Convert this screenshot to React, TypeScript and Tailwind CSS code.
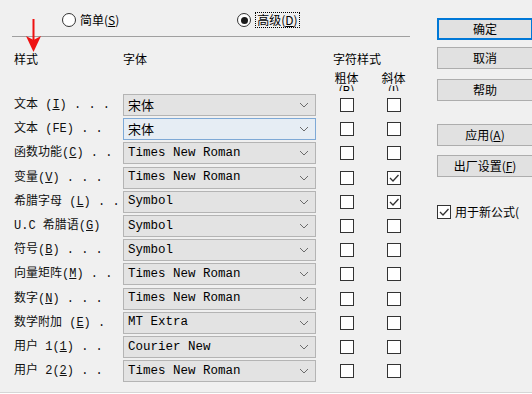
import React from 'react'

const cjk = { fontFamily: '"Noto Sans CJK SC", "Liberation Sans", sans-serif' }
const mono = { fontFamily: '"Liberation Mono", "Noto Sans CJK SC", monospace' }

type Row = { pre: string; key?: string; post: string; font: string; cjkFont?: boolean; bold?: boolean; italic?: boolean; focus?: boolean }

const rows: Row[] = [
  { pre: '文本 (', key: 'I', post: ') . . .', font: '宋体', cjkFont: true },
  { pre: '文本 (FE', post: ') . .', font: '宋体', cjkFont: true, focus: true },
  { pre: '函数功能(', key: 'C', post: ') . .', font: 'Times New Roman' },
  { pre: '变量(', key: 'V', post: ') . . .', font: 'Times New Roman', italic: true },
  { pre: '希腊字母 (', key: 'L', post: ') . .', font: 'Symbol', italic: true },
  { pre: 'U.C 希腊语(', key: 'G', post: ')', font: 'Symbol' },
  { pre: '符号(', key: 'B', post: ') . . .', font: 'Symbol' },
  { pre: '向量矩阵(', key: 'M', post: ') . .', font: 'Times New Roman' },
  { pre: '数字(', key: 'N', post: ') . . .', font: 'Times New Roman' },
  { pre: '数学附加 (', key: 'E', post: ') .', font: 'MT Extra' },
  { pre: '用户 1(', key: '1', post: ') . .', font: 'Courier New' },
  { pre: '用户 2(', key: '2', post: ') . .', font: 'Times New Roman' },
]

function Check({ checked }: { checked?: boolean }) {
  return (
    <div className="w-[14px] h-[14px] border border-[#333333] bg-white flex items-center justify-center">
      {checked && (
        <svg width="12" height="12" viewBox="0 0 12 12">
          <path d="M2 6 L5 9 L10.5 3" fill="none" stroke="#333333" strokeWidth="1.3" />
        </svg>
      )}
    </div>
  )
}

function Radio({ on }: { on?: boolean }) {
  return (
    <div className="w-[14px] h-[14px] rounded-full border border-[#333333] bg-white flex items-center justify-center">
      {on && <div className="w-[7px] h-[7px] rounded-full bg-[#1a1a1a]" />}
    </div>
  )
}

function Button({ children, primary, className }: { children: React.ReactNode; primary?: boolean; className?: string }) {
  return (
    <div
      className={`w-[96px] h-[22px] flex items-center justify-center text-[12px] text-black ${
        primary ? 'border-2 border-[#0078d7] bg-[#e1e1e1]' : 'border border-[#adadad] bg-[#e1e1e1]'
      } ${className ?? ''}`}
      style={cjk}
    >
      {children}
    </div>
  )
}

export default function App() {
  return (
    <div className="relative w-[532px] h-[394px] overflow-hidden bg-[#f0f0f0] text-black">
      <div className="flex h-[392px]">
        {/* left side */}
        <div className="w-[425px] shrink-0 pl-[12px]">
          <div className="pt-[11px] h-[29px] flex items-center text-[12px] leading-[14px]" style={cjk}>
            <div className="ml-[50px] flex items-center gap-[4px]">
              <Radio />
              <span>
                简单(<span className="underline">S</span>)
              </span>
            </div>
            <div className="ml-[118px] flex items-center gap-[4px]">
              <Radio on />
              <span className="border border-dotted border-black px-[1px]">
                高级(<span className="underline">D</span>)
              </span>
            </div>
          </div>
          <div className="mt-[7px] h-px w-[398px] bg-[#a0a0a0]" />

          {/* headers */}
          <div className="h-[57px] text-[12px]" style={cjk}>
            <div className="pt-[15px] flex leading-[14px]">
              <div className="w-[111px] pl-[2px]">样式</div>
              <div className="w-[193px]">字体</div>
              <div className="pl-[17px]">字符样式</div>
            </div>
            <div className="mt-[6px] flex">
              <div className="w-[304px]" />
              <div className="pl-[7px] flex h-[19px] overflow-hidden leading-[12px]">
                <div className="w-[47px] flex flex-col items-center">
                  <span>粗体</span>
                  <span>
                    (<span className="underline">B</span>)
                  </span>
                </div>
                <div className="w-[47px] flex flex-col items-center">
                  <span>斜体</span>
                  <span>
                    (<span className="underline">I</span>)
                  </span>
                </div>
              </div>
            </div>
          </div>

          {/* rows */}
          <div className="flex flex-col gap-[2.2px]">
            {rows.map((r, i) => (
              <div key={i} className="flex items-center h-[22px]">
                <div className="w-[111px] pl-[2px] text-[12px] whitespace-pre text-[#111111]" style={mono}>
                  {r.pre}
                  {r.key && <span className="underline">{r.key}</span>}
                  {r.post}
                </div>
                <div
                  className={`w-[193px] h-[22px] flex items-center justify-between pl-[4px] pr-[6px] border ${
                    r.focus ? 'bg-[#e6edf4] border-[#7ea9d6]' : 'bg-[#e3e3e3] border-[#b4b4b4]'
                  }`}
                >
                  <span
                    className={r.cjkFont ? 'text-[13px]' : 'text-[12.5px]'}
                    style={r.cjkFont ? cjk : mono}
                  >
                    {r.font}
                  </span>
                  <svg width="10" height="6" viewBox="0 0 10 6">
                    <path d="M1 1 L5 5 L9 1" fill="none" stroke="#6b6b6b" strokeWidth="1" />
                  </svg>
                </div>
                <div className="pl-[7px] flex">
                  <div className="w-[47px] flex justify-center">
                    <Check checked={r.bold} />
                  </div>
                  <div className="w-[47px] flex justify-center">
                    <Check checked={r.italic} />
                  </div>
                </div>
              </div>
            ))}
          </div>
        </div>

        {/* right side */}
        <div className="ml-[12px] flex flex-col">
          <Button primary className="mt-[18px]">确定</Button>
          <Button className="mt-[7px]">取消</Button>
          <Button className="mt-[10px]">帮助</Button>
          <Button className="mt-[23px]">
            应用(<span className="underline">A</span>)
          </Button>
          <Button className="mt-[9px]">
            出厂设置(<span className="underline">F</span>)
          </Button>
          <div className="mt-[26px] flex items-center gap-[4px] text-[12px] whitespace-nowrap" style={cjk}>
            <Check checked />
            <span>用于新公式(</span>
          </div>
        </div>
      </div>
      <div className="h-px bg-[#d6d6d6]" />
      <div className="h-px bg-white" />

      {/* red annotation arrow */}
      <svg className="absolute left-[26px] top-[19px]" width="15" height="34" viewBox="0 0 15 34">
        <line x1="7.5" y1="0" x2="7.5" y2="22" stroke="#ee1111" strokeWidth="2" />
        <polygon points="0,17 7.5,21 15,17 7.5,33" fill="#ee1111" />
      </svg>
    </div>
  )
}
